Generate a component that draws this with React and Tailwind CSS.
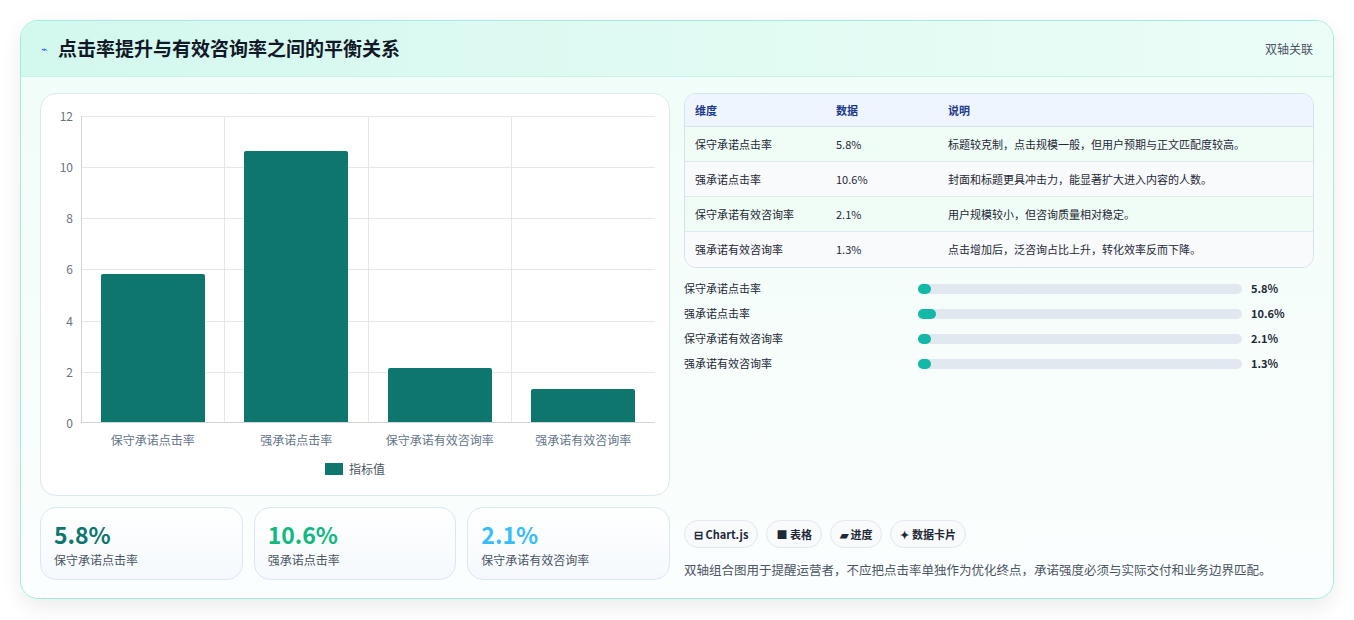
import React from 'react';

const font = { fontFamily: '"Noto Sans CJK SC", "Noto Sans", sans-serif' };

const data = [
  { name: '保守承诺点击率', v: 5.8, note: '标题较克制，点击规模一般，但用户预期与正文匹配度较高。', w: 13 },
  { name: '强承诺点击率', v: 10.6, note: '封面和标题更具冲击力，能显著扩大进入内容的人数。', w: 18 },
  { name: '保守承诺有效咨询率', v: 2.1, note: '用户规模较小，但咨询质量相对稳定。', w: 13 },
  { name: '强承诺有效咨询率', v: 1.3, note: '点击增加后，泛咨询占比上升，转化效率反而下降。', w: 13 },
];

function Chart() {
  const ticks = [12, 10, 8, 6, 4, 2, 0];
  return (
    <div className="h-[403px] rounded-2xl border border-[#dfe7ef] bg-white pt-[22px] pr-[14px] pl-[14px]">
      <div className="flex">
        <div className="relative h-[307px] w-[26px] text-[12px] text-[#6b7280]">
          {ticks.map(t => (
            <span key={t} className="absolute right-[8px] leading-none" style={{ top: (12 - t) * 25.58 - 6 }}>{t}</span>
          ))}
        </div>
        <div className="relative h-[307px] flex-1 border-l border-b border-[#d1d5db]">
          {ticks.slice(0, 6).map(t => (
            <div key={t} className="absolute left-0 right-0 border-t border-[#e5e7eb]" style={{ top: (12 - t) * 25.58 }} />
          ))}
          <div className="absolute inset-0 grid grid-cols-4">
            {data.map((d, i) => (
              <div key={i} className={`relative flex items-end justify-center ${i < 3 ? 'border-r border-[#e5e7eb]' : ''}`}>
                <div className="w-[104px] rounded-t-[2px] bg-[#0f766e]" style={{ height: d.v * 25.58 }} />
              </div>
            ))}
          </div>
        </div>
      </div>
      <div className="ml-[26px] grid grid-cols-4 pt-[8px] text-[12px] text-[#64748b]">
        {data.map(d => <div key={d.name} className="text-center">{d.name}</div>)}
      </div>
      <div className="mt-[11px] flex items-center justify-center gap-[6px] text-[12px] text-[#4b5563]">
        <span className="h-[12px] w-[18px] bg-[#0f766e]" /> 指标值
      </div>
    </div>
  );
}

function Stat({ v, label, color }) {
  return (
    <div className="h-[73px] flex-1 rounded-2xl border border-[#dbe7f3] bg-gradient-to-b from-white to-[#f5f9fd] px-[13px] pt-[11px]">
      <div className={`text-[23px] font-bold leading-[30px] ${color}`}>{v}</div>
      <div className="mt-[2px] text-[12px] text-[#4b5563]">{label}</div>
    </div>
  );
}

export default function App() {
  return (
    <div style={font} className="min-h-[620px] bg-white p-[20px]">
      <div className="overflow-hidden rounded-[18px] border border-[#a5eadf] bg-gradient-to-b from-[#f0fdf8] to-[#fbfefe] shadow-[0_8px_20px_rgba(0,0,0,0.08)]">
        <div className="flex h-[56px] items-center justify-between border-b border-[#c9f1e6] bg-gradient-to-r from-[#d3f8ee] to-[#ecfdf7] px-[20px]">
          <div className="flex items-center gap-[10px]">
            <span className="text-[11px] text-[#2563eb]">⌁</span>
            <h1 className="text-[19px] font-bold text-[#111827]">点击率提升与有效咨询率之间的平衡关系</h1>
          </div>
          <span className="text-[12px] text-[#4b5563]">双轴关联</span>
        </div>
        <div className="flex gap-[14px] px-[19px] pt-[16px] pb-[18px]">
          <div className="flex w-[630px] flex-col gap-[11px]">
            <Chart />
            <div className="flex gap-[11px]">
              <Stat v="5.8%" label="保守承诺点击率" color="text-[#0f766e]" />
              <Stat v="10.6%" label="强承诺点击率" color="text-[#10b981]" />
              <Stat v="2.1%" label="保守承诺有效咨询率" color="text-[#38bdf8]" />
            </div>
          </div>
          <div className="flex flex-1 flex-col">
            <div className="overflow-hidden rounded-xl border border-[#d5e2ee] text-[11px]">
              <div className="flex h-[33px] items-center bg-[#eef5ff] font-semibold text-[#1e3a8a] border-b border-[#d5e2ee]">
                <div className="w-[151px] pl-[10px]">维度</div>
                <div className="w-[112px]">数据</div>
                <div>说明</div>
              </div>
              {data.map((d, i) => (
                <div key={i} className={`flex h-[35px] items-center text-[#1f2937] ${i % 2 ? 'bg-[#f8fafc]' : 'bg-[#f0fdf6]'} ${i < 3 ? 'border-b border-[#e2e8f0]' : ''}`}>
                  <div className="w-[151px] pl-[10px]">{d.name}</div>
                  <div className="w-[112px]">{d.v}%</div>
                  <div>{d.note}</div>
                </div>
              ))}
            </div>
            <div className="mt-[12px] flex flex-col gap-[8px] text-[11px] text-[#1f2937]">
              {data.map((d, i) => (
                <div key={i} className="flex h-[17px] items-center">
                  <div className="w-[234px]">{d.name}</div>
                  <div className="h-[10px] w-[324px] rounded-full bg-[#e2e8f0]">
                    <div className="h-[10px] rounded-full bg-[#14b8a6]" style={{ width: d.w }} />
                  </div>
                  <div className="pl-[9px] font-bold">{d.v}%</div>
                </div>
              ))}
            </div>
            <div className="mt-auto flex gap-[8px] text-[11px] font-semibold text-[#1f2937]">
              {['⊟ Chart.js', '■ 表格', '▰ 进度', '✦ 数据卡片'].map(c => (
                <span key={c} className="rounded-full border border-[#e2e8f0] bg-[#f8fafc] px-[9px] py-[5px]">{c}</span>
              ))}
            </div>
            <p className="mt-[13px] text-[12.5px] text-[#4b5563]">双轴组合图用于提醒运营者，不应把点击率单独作为优化终点，承诺强度必须与实际交付和业务边界匹配。</p>
          </div>
        </div>
      </div>
    </div>
  );
}
